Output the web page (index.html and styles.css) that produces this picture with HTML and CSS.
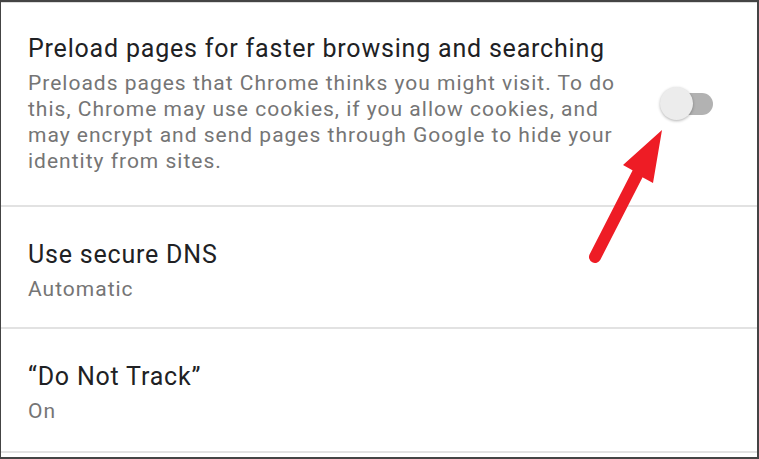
FILE: index.html
```html
<!DOCTYPE html>
<html>
<head>
<meta charset="utf-8">
<link rel="stylesheet" href="styles.css">
</head>
<body>
<div class="frame">
  <div class="list">
    <div class="item item-toggle">
      <div class="text">
        <div class="title">Preload pages for faster browsing and searching</div>
        <div class="summary">Preloads pages that Chrome thinks you might visit. To do<br>this, Chrome may use cookies, if you allow cookies, and<br>may encrypt and send pages through Google to hide your<br>identity from sites.</div>
      </div>
      <div class="switch"><span class="track"></span><span class="thumb"></span></div>
    </div>
    <div class="item item-dns">
      <div class="text">
        <div class="title">Use secure DNS</div>
        <div class="summary">Automatic</div>
      </div>
    </div>
    <div class="item item-dnt">
      <div class="text">
        <div class="title">“Do Not Track”</div>
        <div class="summary">On</div>
      </div>
    </div>
  </div>
  <svg class="arrow" width="759" height="459" viewBox="0 0 759 459">
    <line x1="595" y1="257" x2="638" y2="173" stroke="#ee1c25" stroke-width="12" stroke-linecap="round"/>
    <polygon points="662,130 623,165 632,170 642,177 653,183" fill="#ee1c25"/>
  </svg>
</div>
</body>
</html>
```
FILE: styles.css
```css
html, body {
  margin: 0;
  padding: 0;
  background: #ffffff;
}
.frame {
  position: relative;
  width: 759px;
  height: 459px;
  box-sizing: border-box;
  border-top: 2px solid #444444;
  border-left: 1px solid #444444;
  border-right: 2px solid #444444;
  border-bottom: 2px solid #444444;
  overflow: hidden;
  font-family: Roboto, "Noto Sans", sans-serif;
}
.list {
  border-top: 1px solid #dcdcdc;
}
.item {
  display: flex;
  align-items: center;
  border-bottom: 2px solid #e2e2e2;
  padding-left: 27px;
}
.item-toggle {
  padding-top: 30px;
  padding-bottom: 31px;
}
.item-dns {
  padding-top: 32px;
  padding-bottom: 25px;
}
.item-dnt {
  padding-top: 32px;
  padding-bottom: 27px;
}
.text {
  flex: 1;
  min-width: 0;
}
.title {
  font-size: 25px;
  line-height: 32px;
  letter-spacing: 0.8px;
  color: #202124;
}
.summary {
  font-size: 21px;
  line-height: 26px;
  letter-spacing: 1px;
  color: #757575;
  margin-top: 5px;
  white-space: nowrap;
}
.switch {
  position: relative;
  width: 53px;
  height: 34px;
  margin: 0 44px 0 30px;
  flex: none;
}
.track {
  position: absolute;
  left: 19px;
  top: 6px;
  width: 34px;
  height: 22px;
  border-radius: 11px;
  background: #b2b2b2;
}
.thumb {
  position: absolute;
  left: 0;
  top: 0;
  width: 33px;
  height: 33px;
  border-radius: 50%;
  background: #ececec;
  box-shadow: 0 1px 3px rgba(0,0,0,0.3);
}
.arrow {
  position: absolute;
  left: -1px;
  top: -2px;
  pointer-events: none;
}
```
